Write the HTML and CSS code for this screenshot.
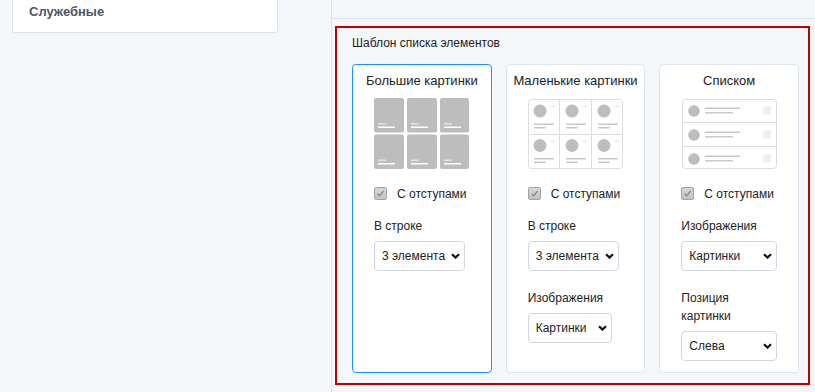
FILE: index.html
```html
<!DOCTYPE html>
<html lang="ru">
<head>
    <meta charset="UTF-8">
    <meta name="viewport" content="width=device-width, initial-scale=1.0">
    <title>Шаблон списка элементов</title>
    <link rel="stylesheet" href="styles.css">
</head>
<body>

<div class="page">
    <div class="sidebar">
        <div class="side-card">Служебные</div>
    </div>

    <div class="main">
        <div class="main-head"></div>
        <div class="main-body">
            <div class="template-box">
                <div class="template-title">Шаблон списка элементов</div>

                <div class="cards">
                    <!-- large pictures -->
                    <div class="card selected">
                        <div class="card-title">Большие картинки</div>
                        <div class="preview">
                            <svg width="95" height="72" viewBox="0 0 95 72">
                                <g fill="#bdbdbd">
                                    <rect x="0" y="0" width="30" height="34.5" rx="2"/>
                                    <rect x="33" y="0" width="30" height="34.5" rx="2"/>
                                    <rect x="66" y="0" width="29" height="34.5" rx="2"/>
                                    <rect x="0" y="36.5" width="30" height="34.5" rx="2"/>
                                    <rect x="33" y="36.5" width="30" height="34.5" rx="2"/>
                                    <rect x="66" y="36.5" width="29" height="34.5" rx="2"/>
                                </g>
                                <g fill="#e4e4e4">
                                    <rect x="4" y="25" width="8" height="1.5"/>
                                    <rect x="37" y="25" width="8" height="1.5"/>
                                    <rect x="70" y="25" width="8" height="1.5"/>
                                    <rect x="4" y="61.5" width="8" height="1.5"/>
                                    <rect x="37" y="61.5" width="8" height="1.5"/>
                                    <rect x="70" y="61.5" width="8" height="1.5"/>
                                </g>
                                <g fill="#ffffff">
                                    <rect x="4" y="28.5" width="17" height="1.5"/>
                                    <rect x="37" y="28.5" width="17" height="1.5"/>
                                    <rect x="70" y="28.5" width="17" height="1.5"/>
                                    <rect x="4" y="65" width="17" height="1.5"/>
                                    <rect x="37" y="65" width="17" height="1.5"/>
                                    <rect x="70" y="65" width="17" height="1.5"/>
                                </g>
                            </svg>
                        </div>
                        <div class="check-row">
                            <span class="check"><svg width="9" height="9" viewBox="0 0 9 9"><path d="M1.5 4.8 L3.6 6.8 L7.6 2" fill="none" stroke="#8a8a8a" stroke-width="1.4"/></svg></span>
                            <span>С отступами</span>
                        </div>
                        <div class="field">
                            <label>В строке</label>
                            <div class="select-wrap w-91">
                                <select>
                                    <option>3 элемента</option>
                                </select>
                                <svg class="chevron" width="9" height="6" viewBox="0 0 9 6"><path d="M1 1.2 L4.5 4.6 L8 1.2" fill="none" stroke="#111" stroke-width="2.2"/></svg>
                            </div>
                        </div>
                    </div>

                    <!-- small pictures -->
                    <div class="card">
                        <div class="card-title">Маленькие картинки</div>
                        <div class="preview">
                            <svg width="95" height="72" viewBox="0 0 95 72">
                                <rect x="0.5" y="1.5" width="94" height="69" rx="3" fill="#fff" stroke="#dcdcdc"/>
                                <path d="M31.5 2 V70 M63.5 2 V70 M1 36.5 H94" stroke="#dcdcdc"/>
                                <g fill="#bdbdbd">
                                    <circle cx="12" cy="13" r="6.5"/>
                                    <circle cx="44" cy="13" r="6.5"/>
                                    <circle cx="76" cy="13" r="6.5"/>
                                    <circle cx="12" cy="47.5" r="6.5"/>
                                    <circle cx="44" cy="47.5" r="6.5"/>
                                    <circle cx="76" cy="47.5" r="6.5"/>
                                </g>
                                <g fill="#e2e2e2">
                                    <rect x="23" y="8" width="4" height="1"/>
                                    <rect x="55" y="8" width="4" height="1"/>
                                    <rect x="87" y="8" width="4" height="1"/>
                                    <rect x="23" y="42.5" width="4" height="1"/>
                                    <rect x="55" y="42.5" width="4" height="1"/>
                                    <rect x="87" y="42.5" width="4" height="1"/>
                                </g>
                                <g fill="#c8c8c8">
                                    <rect x="6" y="25.5" width="20" height="1.5"/>
                                    <rect x="6" y="29" width="12" height="1.5"/>
                                    <rect x="38" y="25.5" width="20" height="1.5"/>
                                    <rect x="38" y="29" width="12" height="1.5"/>
                                    <rect x="70" y="25.5" width="20" height="1.5"/>
                                    <rect x="70" y="29" width="12" height="1.5"/>
                                    <rect x="6" y="60" width="20" height="1.5"/>
                                    <rect x="6" y="63.5" width="12" height="1.5"/>
                                    <rect x="38" y="60" width="20" height="1.5"/>
                                    <rect x="38" y="63.5" width="12" height="1.5"/>
                                    <rect x="70" y="60" width="20" height="1.5"/>
                                    <rect x="70" y="63.5" width="12" height="1.5"/>
                                </g>
                            </svg>
                        </div>
                        <div class="check-row">
                            <span class="check"><svg width="9" height="9" viewBox="0 0 9 9"><path d="M1.5 4.8 L3.6 6.8 L7.6 2" fill="none" stroke="#8a8a8a" stroke-width="1.4"/></svg></span>
                            <span>С отступами</span>
                        </div>
                        <div class="field">
                            <label>В строке</label>
                            <div class="select-wrap w-91">
                                <select>
                                    <option>3 элемента</option>
                                </select>
                                <svg class="chevron" width="9" height="6" viewBox="0 0 9 6"><path d="M1 1.2 L4.5 4.6 L8 1.2" fill="none" stroke="#111" stroke-width="2.2"/></svg>
                            </div>
                        </div>
                        <div class="field">
                            <label>Изображения</label>
                            <div class="select-wrap w-84">
                                <select>
                                    <option>Картинки</option>
                                </select>
                                <svg class="chevron" width="9" height="6" viewBox="0 0 9 6"><path d="M1 1.2 L4.5 4.6 L8 1.2" fill="none" stroke="#111" stroke-width="2.2"/></svg>
                            </div>
                        </div>
                    </div>

                    <!-- list -->
                    <div class="card">
                        <div class="card-title">Списком</div>
                        <div class="preview">
                            <svg width="95" height="72" viewBox="0 0 95 72">
                                <rect x="0.5" y="1.5" width="94" height="69" rx="3" fill="#fff" stroke="#dcdcdc"/>
                                <path d="M1 24.5 H94 M1 48.5 H94" stroke="#dcdcdc"/>
                                <g fill="#bdbdbd">
                                    <circle cx="12" cy="13" r="5.8"/>
                                    <circle cx="12" cy="37" r="5.8"/>
                                    <circle cx="12" cy="61" r="5.8"/>
                                </g>
                                <g fill="#c8c8c8">
                                    <rect x="23" y="9.5" width="35" height="1.5"/>
                                    <rect x="23" y="14" width="28" height="1.5"/>
                                    <rect x="23" y="33.5" width="35" height="1.5"/>
                                    <rect x="23" y="38" width="28" height="1.5"/>
                                    <rect x="23" y="57.5" width="35" height="1.5"/>
                                    <rect x="23" y="62" width="28" height="1.5"/>
                                </g>
                                <g fill="#eeeeee">
                                    <rect x="81" y="8.5" width="8" height="8" rx="1.5"/>
                                    <rect x="81" y="32.5" width="8" height="8" rx="1.5"/>
                                    <rect x="81" y="56.5" width="8" height="8" rx="1.5"/>
                                </g>
                            </svg>
                        </div>
                        <div class="check-row">
                            <span class="check"><svg width="9" height="9" viewBox="0 0 9 9"><path d="M1.5 4.8 L3.6 6.8 L7.6 2" fill="none" stroke="#8a8a8a" stroke-width="1.4"/></svg></span>
                            <span>С отступами</span>
                        </div>
                        <div class="field">
                            <label>Изображения</label>
                            <div class="select-wrap">
                                <select>
                                    <option>Картинки</option>
                                </select>
                                <svg class="chevron" width="9" height="6" viewBox="0 0 9 6"><path d="M1 1.2 L4.5 4.6 L8 1.2" fill="none" stroke="#111" stroke-width="2.2"/></svg>
                            </div>
                        </div>
                        <div class="field">
                            <label>Позиция<br>картинки</label>
                            <div class="select-wrap">
                                <select>
                                    <option>Слева</option>
                                </select>
                                <svg class="chevron" width="9" height="6" viewBox="0 0 9 6"><path d="M1 1.2 L4.5 4.6 L8 1.2" fill="none" stroke="#111" stroke-width="2.2"/></svg>
                            </div>
                        </div>
                    </div>
                </div>
            </div>
        </div>
    </div>
</div>

</body>
</html>
```

FILE: styles.css
```css
body {
    font-family: "Liberation Sans", Arial, sans-serif;
    margin: 0;
    background-color: #f4f7f9;
    color: #222;
}
.page {
    display: flex;
    height: 392px;
}
.sidebar {
    flex-shrink: 0;
    width: 319px;
    padding-left: 12px;
}
.side-card {
    width: 266px;
    height: 33px;
    padding: 4px 0 0 16px;
    box-sizing: border-box;
    background: white;
    border: 1px solid #dbe3ea;
    border-top: none;
    border-radius: 0 0 3px 3px;
    font-size: 13px;
    font-weight: bold;
    color: #4b5865;
}
.main {
    flex: 1;
    min-width: 0;
    display: flex;
    flex-direction: column;
}
.main-head {
    height: 18px;
    border-left: 1px solid #dbe3ea;
    border-bottom: 1px solid #dbe3ea;
}
.main-body {
    flex: 1;
    margin-top: 1px;
    padding: 6px 5px 0 3px;
    border-left: 1px solid #dbe3ea;
}
.template-box {
    border: 2px solid #bf0000;
    padding: 8px 9px 10px 15px;
}
.template-title {
    font-size: 12px;
    line-height: 14px;
    margin-bottom: 14px;
}
.cards {
    display: flex;
    gap: 14px;
}
.card {
    flex: 1;
    min-width: 0;
    background: white;
    border: 1px solid #dde6ee;
    border-radius: 4px;
    padding: 8px 21px 11px 21px;
}
.card.selected {
    border-color: #1e8fff;
}
.card-title {
    font-size: 13px;
    line-height: 16px;
    text-align: center;
    white-space: nowrap;
    margin: 0 -15px;
}
.preview {
    display: flex;
    justify-content: center;
    margin-top: 9px;
    height: 72px;
}
.preview svg {
    display: block;
}
.check-row {
    display: flex;
    align-items: center;
    gap: 10px;
    margin-top: 17px;
    height: 13px;
    font-size: 12px;
}
.check {
    width: 11px;
    height: 11px;
    border: 1px solid #a3a3a3;
    border-radius: 2px;
    background: linear-gradient(#d8d8d8, #c2c2c2);
    display: flex;
    align-items: center;
    justify-content: center;
}
.check svg {
    display: block;
}
.field {
    margin-top: 17px;
}
.field + .field {
    margin-top: 18px;
}
label {
    display: block;
    font-size: 12px;
    line-height: 18px;
    margin-bottom: 6px;
}
.select-wrap {
    position: relative;
    height: 30px;
}
.select-wrap select {
    appearance: none;
    -webkit-appearance: none;
    display: block;
    width: 100%;
    height: 30px;
    box-sizing: border-box;
    font-family: "Liberation Sans", Arial, sans-serif;
    font-size: 12px;
    color: #222;
    background-color: white;
    border: 1px solid #cfd8e0;
    border-radius: 4px;
    padding: 0 14px 0 7px;
    outline: none;
}
.chevron {
    position: absolute;
    right: 5px;
    top: 12px;
    pointer-events: none;
}
.w-91 {
    width: 91px;
}
.w-84 {
    width: 84px;
}
```
